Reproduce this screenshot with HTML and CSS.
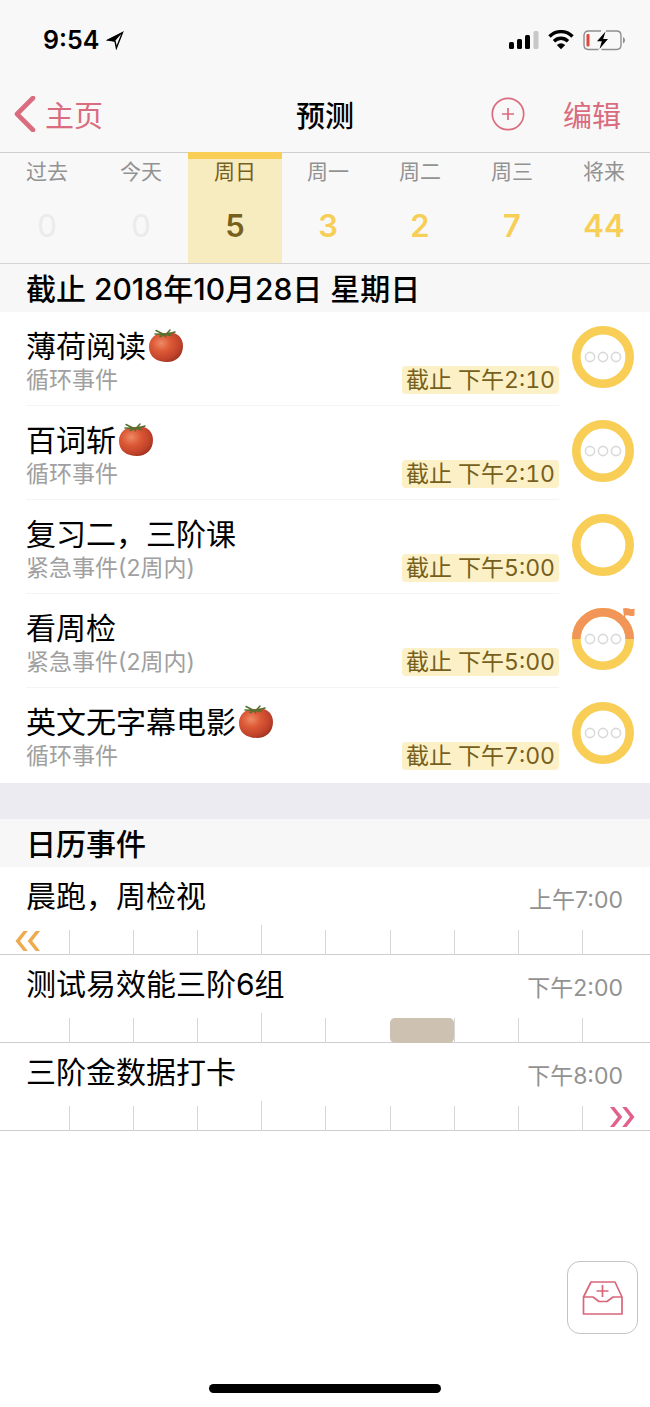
FILE: index.html
```html
<!DOCTYPE html>
<html lang="zh-CN">
<head>
<meta charset="utf-8">
<meta name="viewport" content="width=device-width, initial-scale=1">
<title>预测</title>
<link rel="stylesheet" href="styles.css">
</head>
<body>
<svg class="defs" aria-hidden="true">
  <defs>
    <radialGradient id="skin" cx="36%" cy="36%" r="70%">
      <stop offset="0" stop-color="#ee8a66"/>
      <stop offset="0.4" stop-color="#dc5936"/>
      <stop offset="0.8" stop-color="#c0422a"/>
      <stop offset="1" stop-color="#9c3420"/>
    </radialGradient>
    <symbol id="tomato" viewBox="0 0 36 34">
      <path d="M18 4C28 2 35 8 35 17C35 27 28 33 19 33C9 33 1 28 1 18C1 9 8 3 18 4Z" fill="url(#skin)"/>
      <path d="M17 5.500L12 7.500M17 5.500L7 5M16 5.500L8 1.500M18 5.500L22 1M18 5.500L27 3M18 5.500L23 6.500M17 5L17.500 8" stroke="#55702f" stroke-width="1.500" stroke-linecap="round" fill="none"/>
    </symbol>
    <symbol id="dots" viewBox="0 0 62 62">
      <g fill="none" stroke="#dadada" stroke-width="1.600">
        <circle cx="18" cy="31" r="4.600"/><circle cx="31" cy="31" r="4.600"/><circle cx="44" cy="31" r="4.600"/>
      </g>
    </symbol>
  </defs>
</svg>
<div class="app">
  <header class="top">
    <div class="statusbar">
      <div class="clock">9:54
        <svg width="18" height="19" viewBox="0 0 18 19"><path d="M16.500 1.500L2 9L9 10L10.400 17Z" fill="none" stroke="#000" stroke-width="1.400"/><path d="M17 1L8.500 10.500L1 9Z"/></svg>
      </div>
      <div class="signals">
        <svg width="30" height="20" viewBox="0 0 30 20"><rect x="0" y="12" width="5" height="7" rx="1.500"/><rect x="8" y="9" width="5" height="10" rx="1.500"/><rect x="16" y="5" width="5" height="14" rx="1.500"/><rect x="24.500" y="1" width="5" height="18" rx="1.500" fill="#c8c8c8"/></svg>
        <svg width="26" height="20" viewBox="0 0 26 20"><g fill="none" stroke="#000" stroke-width="3.400"><path d="M1.500 6.500C8 0 18 0 24.500 6.500"/><path d="M6 11.200C10 7.200 16 7.200 20 11.200"/></g><path d="M8.800 15Q13 11.400 17.200 15L13 19.300Z"/></svg>
        <svg width="42" height="21" viewBox="0 0 42 21"><g fill="none" stroke="#8e8e8e" stroke-width="1.400"><path d="M18 1H5.500Q1 1 1 5.500V15Q1 19.500 5.500 19.500H15.500"/><path d="M23 1H33.500Q38 1 38 5.500V15Q38 19.500 33.500 19.500H18.500"/></g><rect x="3.500" y="4" width="3" height="12.500" rx="1" fill="#e0483c"/><path d="M40 7Q42 8 42 10.300Q42 12.500 40 13.500Z" fill="#8e8e8e"/><path d="M22.500 1.500L14 11.200H18.800L16.500 19L25 9H20.200Z"/></svg>
      </div>
    </div>
    <nav class="navbar">
      <button class="back" type="button">
        <svg width="22" height="36" viewBox="0 0 22 36"><path d="M19 2L3 18L19 34" fill="none" stroke="currentColor" stroke-width="4.600" stroke-linecap="round" stroke-linejoin="round"/></svg>
        主页
      </button>
      <h1>预测</h1>
      <div class="actions">
        <button type="button" aria-label="添加"><svg width="34" height="34" viewBox="0 0 34 34"><g fill="none" stroke="currentColor" stroke-width="1.700"><circle cx="17" cy="17" r="15.700"/><path d="M17 11V23M11 17H23"/></g></svg></button>
        <button type="button">编辑</button>
      </div>
    </nav>
  </header>

  <div class="days">
    <button class="day wide none" type="button"><span>过去</span><b>0</b></button>
    <button class="day wide none" type="button"><span>今天</span><b>0</b></button>
    <button class="day wide selected" type="button"><span>周日</span><b>5</b></button>
    <button class="day" type="button"><span>周一</span><b>3</b></button>
    <button class="day" type="button"><span>周二</span><b>2</b></button>
    <button class="day" type="button"><span>周三</span><b>7</b></button>
    <button class="day" type="button"><span>将来</span><b>44</b></button>
  </div>

  <main>
    <section>
      <h2>截止 2018年10月28日 星期日</h2>
      <ul class="tasks">
        <li class="task">
          <div class="body"><h3><label for="t1">薄荷阅读</label><svg class="tomato"><use href="#tomato"/></svg></h3><div class="meta"><span>循环事件</span><time>截止 下午2:10</time></div></div>
          <div class="status"><input type="checkbox" id="t1"><svg viewBox="0 0 62 62"><circle cx="31" cy="31" r="26.700" class="ring"/><use href="#dots"/></svg></div>
        </li>
        <li class="task">
          <div class="body"><h3><label for="t2">百词斩</label><svg class="tomato"><use href="#tomato"/></svg></h3><div class="meta"><span>循环事件</span><time>截止 下午2:10</time></div></div>
          <div class="status"><input type="checkbox" id="t2"><svg viewBox="0 0 62 62"><circle cx="31" cy="31" r="26.700" class="ring"/><use href="#dots"/></svg></div>
        </li>
        <li class="task">
          <div class="body"><h3><label for="t3">复习二，三阶课</label></h3><div class="meta"><span>紧急事件(2周内)</span><time>截止 下午5:00</time></div></div>
          <div class="status"><input type="checkbox" id="t3"><svg viewBox="0 0 62 62"><circle cx="31" cy="31" r="26.700" class="ring"/></svg></div>
        </li>
        <li class="task">
          <div class="body"><h3><label for="t4">看周检</label></h3><div class="meta"><span>紧急事件(2周内)</span><time>截止 下午5:00</time></div></div>
          <div class="status"><input type="checkbox" id="t4"><svg viewBox="0 0 62 62"><circle cx="31" cy="31" r="26.700" class="ring"/><path d="M4.300 31A26.700 26.700 0 0 1 57.700 31" class="ring flagged"/><use href="#dots"/><path d="M51 0.500Q54 -0.500 57 0.500Q60 1.500 62.500 0.500V7.500Q60 8.500 57 7.500Q55 7 53 7.500L53.500 9L52 9Z" fill="#f29558"/></svg></div>
        </li>
        <li class="task">
          <div class="body"><h3><label for="t5">英文无字幕电影</label><svg class="tomato"><use href="#tomato"/></svg></h3><div class="meta"><span>循环事件</span><time>截止 下午7:00</time></div></div>
          <div class="status"><input type="checkbox" id="t5"><svg viewBox="0 0 62 62"><circle cx="31" cy="31" r="26.700" class="ring"/><use href="#dots"/></svg></div>
        </li>
      </ul>
    </section>

    <section class="calendar">
      <h2>日历事件</h2>
      <ul>
        <li class="event">
          <div class="info"><h3>晨跑，周检视</h3><time>上午7:00</time></div>
          <div class="hours"><i><svg class="early" width="26" height="23" viewBox="0 0 26 23"><g fill="#eeab4d"><path d="M8.500 1H12.800L5 11L12.800 21H8.500L0.500 11Z"/><path d="M20.700 1H25L17.200 11L25 21H20.700L12.700 11Z"/></g></svg></i><i></i><i></i><i></i><i class="noon"></i><i></i><i></i><i></i><i></i><i></i></div>
        </li>
        <li class="event">
          <div class="info"><h3>测试易效能三阶6组</h3><time>下午2:00</time></div>
          <div class="hours"><i></i><i></i><i></i><i></i><i class="noon"></i><i></i><i class="busy"></i><i></i><i></i><i></i></div>
        </li>
        <li class="event">
          <div class="info"><h3>三阶金数据打卡</h3><time>下午8:00</time></div>
          <div class="hours"><i></i><i></i><i></i><i></i><i class="noon"></i><i></i><i></i><i></i><i></i><i><svg class="late" width="26" height="23" viewBox="0 0 26 23"><g fill="#e0608e"><path d="M5.300 1H1L8.800 11L1 21H5.300L13.300 11Z"/><path d="M17.500 1H13.200L21 11L13.200 21H17.500L25.500 11Z"/></g></svg></i></div>
        </li>
      </ul>
    </section>
  </main>

  <footer>
    <button class="inbox" type="button" aria-label="添加到收件箱">
      <svg width="42" height="36" viewBox="0 0 42 36"><g fill="none" stroke="currentColor" stroke-width="1.700" stroke-linejoin="round"><path d="M1.500 17L9 2H33L40 17V34H1.500Z"/><path d="M1.500 17H11L17 21.500H25L31 17H40"/><path d="M20.500 5V17M14.500 11H26.500"/></g></svg>
    </button>
    <div class="home"></div>
  </footer>
</div>
</body>
</html>
```
FILE: styles.css
```css
* { box-sizing: border-box; }
body {
  margin: 0;
  background: #fff;
  color: #000;
  font-family: Inter, "Noto Sans CJK SC", sans-serif;
}
h1, h2, h3, ul { margin: 0; padding: 0; list-style: none; font-weight: 400; }
button {
  padding: 0;
  border: 0;
  background: none;
  color: inherit;
  font: inherit;
}
svg { display: block; flex: none; }
.defs { position: absolute; width: 0; height: 0; }
.app { display: flex; flex-direction: column; min-height: 100vh; }

.top { background: #f8f8f8; border-bottom: 1px solid #cfcfcf; }
.statusbar {
  display: flex;
  justify-content: space-between;
  align-items: center;
  height: 76px;
  padding: 4px 25px 0 43px;
}
.clock { display: flex; align-items: center; gap: 7px; font-size: 25px; font-weight: 600; }
.signals { display: flex; align-items: center; gap: 9px; }
.navbar {
  display: grid;
  grid-template-columns: 1fr auto 1fr;
  align-items: center;
  height: 76px;
  padding: 0 29px 0 14px;
  color: #da6c7f;
  font-size: 29px;
}
.navbar h1 { color: #000; font-size: 29px; font-weight: 500; padding-left: 15px; }
.back { display: flex; align-items: center; gap: 9px; justify-self: start; }
.actions { display: flex; align-items: center; justify-content: flex-end; gap: 38px; }

.days { display: flex; height: 111px; background: #f8f8f8; border-bottom: 1px solid #d4d4d4; }
.day {
  flex: 92;
  display: flex;
  flex-direction: column;
  align-items: center;
  gap: 22px;
  padding-top: 4px;
  color: #929292;
  font-size: 21px;
  line-height: 30px;
}
.day.wide { flex: 94; }
.day b { color: #f7ce56; font-size: 31px; font-weight: 600; line-height: 34px; }
.day.none b { color: #ebebeb; font-weight: 400; }
.day.selected {
  margin-top: -1px;
  padding-top: 0;
  border-top: 7px solid #f8ce56;
  background: #f7ebc0;
  color: #76601d;
  line-height: 26px;
  gap: 24px;
}
.day.selected b { color: #76601d; }

h2 {
  height: 48px;
  padding-left: 26px;
  background: #f7f7f7;
  font-size: 30px;
  font-weight: 500;
  line-height: 50px;
}
h3 { font-size: 30px; line-height: 40px; }

.tasks { padding-bottom: 1px; }
.task { display: flex; gap: 13px; padding: 0 16px 0 26px; }
.body { flex: 1; padding: 14px 0 11px; border-bottom: 1px solid #f4f4f4; }
.task:last-child .body { border-color: transparent; }
.body h3 { display: flex; align-items: center; }
.tomato { width: 36px; height: 34px; margin-left: 2px; }
.meta {
  display: flex;
  justify-content: space-between;
  color: #a0a0a0;
  font-size: 23px;
  line-height: 28px;
}
.meta time {
  padding: 0 4px;
  border-radius: 4px;
  background: #fcf0c6;
  color: #76601d;
  font-variant-numeric: tabular-nums;
}
.status { position: relative; width: 62px; height: 62px; margin-top: 14px; }
.status input { position: absolute; inset: 0; width: 100%; height: 100%; margin: 0; opacity: 0; }
.status svg { overflow: visible; }
.ring { fill: none; stroke: #f8ce56; stroke-width: 8.6; }
.flagged { stroke: #f29558; }

.calendar { border-top: 36px solid #ebebf1; }
.event { border-bottom: 1px solid #cdcdcd; }
.info {
  display: flex;
  justify-content: space-between;
  align-items: center;
  height: 58px;
  padding: 0 27px 0 26px;
}
.info time { color: #929292; font-size: 23px; padding-top: 3px; }
.hours {
  display: grid;
  grid-template-columns: repeat(10, 1fr);
  align-items: end;
  height: 29px;
  padding: 0 4px 0 5px;
}
.hours i { height: 25px; border-left: 1px solid #d6d6d6; }
.hours i:first-child { border-color: transparent; }
.hours .noon { height: 30px; }
.hours .busy { border: 0; border-radius: 5px; background: #cdc1b1; }
.early { margin-left: 9px; }
.late { margin-left: 26px; }

footer { display: flex; flex-direction: column; align-items: center; margin-top: auto; padding: 40px 12px 14px; }
.inbox {
  display: grid;
  place-items: center;
  align-self: flex-end;
  width: 71px;
  height: 73px;
  border: 1px solid #c4c4c4;
  border-radius: 13px;
  background: #fff;
  color: #d9667a;
}
.home { width: 232px; height: 9px; margin-top: 50px; border-radius: 5px; background: #000; }
```
